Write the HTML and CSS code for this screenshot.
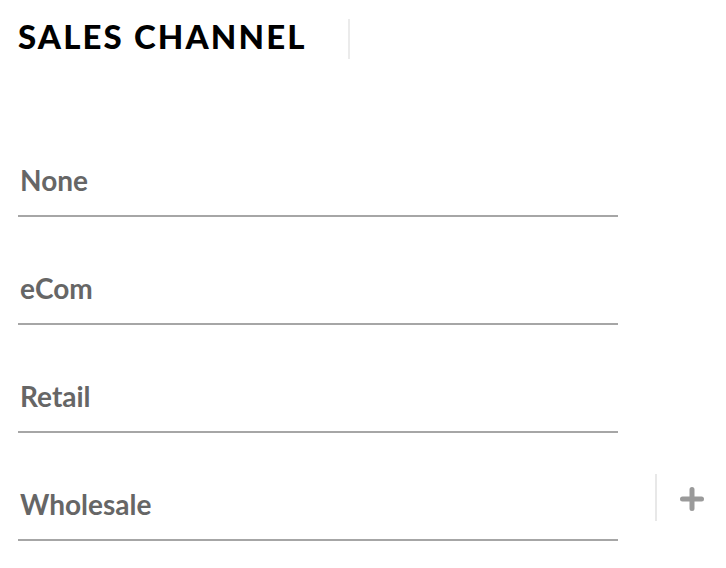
FILE: index.html
```html
<!DOCTYPE html>
<html>
<head>
<meta charset="utf-8">
<link rel="stylesheet" href="styles.css">
</head>
<body>
<header class="header">
  <h1 class="title">SALES CHANNEL</h1>
  <span class="header-divider"></span>
</header>
<main class="list">
  <div class="row"><div class="field">None</div></div>
  <div class="row"><div class="field">eCom</div></div>
  <div class="row"><div class="field">Retail</div></div>
  <div class="row">
    <div class="field">Wholesale</div>
    <div class="actions">
      <span class="action-divider"></span>
      <button class="add-btn" aria-label="Add">
        <svg width="24" height="24" viewBox="0 0 24 24"><path d="M12 2.5v19M2.5 12h19" stroke="#9a9a9a" stroke-width="5" stroke-linecap="round" fill="none"/></svg>
      </button>
    </div>
  </div>
</main>
</body>
</html>
```
FILE: styles.css
```css
html, body {
  margin: 0;
  padding: 0;
  background: #ffffff;
}
body {
  width: 726px;
  height: 568px;
  overflow: hidden;
  font-family: "Lato", "Liberation Sans", sans-serif;
}
.header {
  display: flex;
  align-items: flex-start;
  padding: 18px 0 0 18px;
  height: 90px;
  box-sizing: border-box;
}
.title {
  margin: 0;
  font-size: 33px;
  line-height: 36px;
  font-weight: 900;
  letter-spacing: 2.15px;
  color: #000;
}
.header-divider {
  width: 2px;
  height: 40px;
  background: #ebebeb;
  margin-left: 41px;
  margin-top: 1px;
}
.list {
  padding-left: 18px;
  margin-top: 19px;
}
.row {
  display: flex;
  align-items: flex-end;
}
.field {
  width: 600px;
  height: 108px;
  box-sizing: border-box;
  border-bottom: 2px solid #a6a6a6;
  display: flex;
  align-items: flex-end;
  padding: 0 0 19px 2px;
  font-size: 28px;
  line-height: 32px;
  font-weight: 700;
  color: #666666;
}
.actions {
  display: flex;
  align-items: center;
  margin-left: 37px;
  margin-bottom: 20px;
}
.action-divider {
  width: 2px;
  height: 47px;
  background: #e8e8e8;
}
.add-btn {
  border: 0;
  background: none;
  padding: 0;
  margin-left: 23px;
  margin-top: 2px;
  width: 24px;
  height: 24px;
  display: flex;
}
```
